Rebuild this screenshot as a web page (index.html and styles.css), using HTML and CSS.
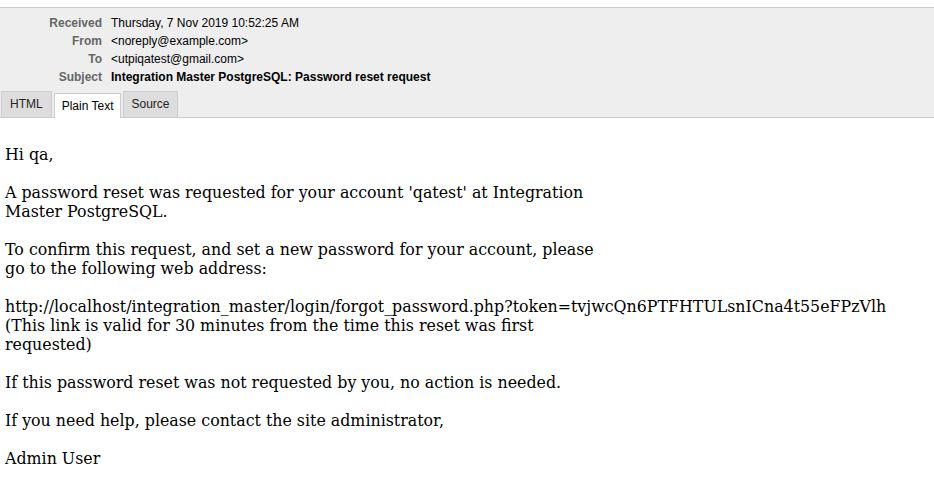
FILE: index.html
```html
<!DOCTYPE html>
<html>
<head>
<meta charset="utf-8">
<link rel="stylesheet" href="styles.css">
</head>
<body>
<div class="header">
  <table class="meta">
    <tr><th>Received</th><td>Thursday, 7 Nov 2019 10:52:25 AM</td></tr>
    <tr><th>From</th><td>&lt;noreply@example.com&gt;</td></tr>
    <tr><th>To</th><td>&lt;utpiqatest@gmail.com&gt;</td></tr>
    <tr><th>Subject</th><td class="subject">Integration Master PostgreSQL: Password reset request</td></tr>
  </table>
  <div class="tabs">
    <span class="tab tab-html">HTML</span>
    <span class="tab active">Plain Text</span>
    <span class="tab">Source</span>
  </div>
</div>
<pre class="body">Hi qa,

A password reset was requested for your account 'qatest' at Integration
Master PostgreSQL.

To confirm this request, and set a new password for your account, please
go to the following web address:

http://localhost/integration_master/login/forgot_password.php?token=tvjwcQn6PTFHTULsnICna4t55eFPzVlh
(This link is valid for 30 minutes from the time this reset was first
requested)

If this password reset was not requested by you, no action is needed.

If you need help, please contact the site administrator,

Admin User</pre>
</body>
</html>
```
FILE: styles.css
```css
html, body {
  margin: 0;
  padding: 0;
  background: #fff;
}
body {
  padding-top: 7px;
}
.header {
  background: #eeeeee;
  border-top: 1px solid #cccccc;
  border-bottom: 1px solid #cccccc;
  font-family: "Liberation Sans", Arial, sans-serif;
  font-size: 12px;
  color: #000;
}
.meta {
  border-collapse: collapse;
  margin-top: 6px;
}
.meta th {
  width: 111px;
  text-align: right;
  color: #666666;
  font-weight: bold;
  padding: 0 9px 0 0;
  height: 18px;
  line-height: 18px;
  box-sizing: border-box;
}
.meta td {
  padding: 0;
  height: 18px;
  line-height: 18px;
}
.meta td.subject {
  font-weight: bold;
}
.tabs {
  display: flex;
  align-items: flex-end;
  gap: 2px;
  padding-left: 1px;
  margin-top: 5px;
  margin-bottom: -1px;
}
.tab {
  display: block;
  background: #dddddd;
  border: 1px solid #cccccc;
  padding: 0 7px;
  height: 27px;
  line-height: 24px;
  color: #222;
  box-sizing: border-box;
}
.tab-html {
  padding: 0 8px 0 8px;
  min-width: 50px;
}
.tab.active {
  background: #ffffff;
  border-bottom: none;
  height: 25px;
  line-height: 25px;
  color: #000;
}
.body {
  font-family: "DejaVu Serif", serif;
  font-size: 15.84px;
  line-height: 19px;
  margin: 0;
  padding: 27px 0 0 5px;
  white-space: pre;
  color: #000;
}
```
